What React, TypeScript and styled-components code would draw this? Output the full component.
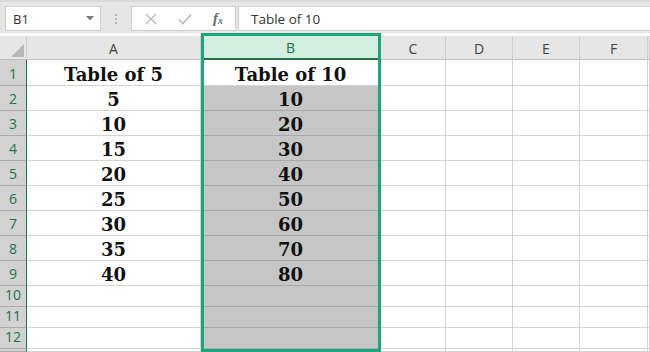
import styled, { createGlobalStyle } from 'styled-components';

const GlobalStyle = createGlobalStyle`
  html, body {
    margin: 0;
    padding: 0;
    background: #ffffff;
    overflow: hidden;
  }
  body {
    font-family: 'Open Sans', 'Noto Sans', sans-serif;
  }
`;

const ROWS: [string, string][] = [
  ['Table of 5', 'Table of 10'],
  ['5', '10'],
  ['10', '20'],
  ['15', '30'],
  ['20', '40'],
  ['25', '50'],
  ['30', '60'],
  ['35', '70'],
  ['40', '80'],
  ['', ''],
  ['', ''],
  ['', ''],
];

const COLUMNS = ['A', 'B', 'C', 'D', 'E', 'F'];
const SELECTED = 'B';

// row header + A..F widths, the last track takes what is left
const WIDTHS = [27, 174, 180, 65, 67, 67, 68];

const rowHeight = (index: number) => (index === 0 ? 26 : index < 9 ? 25 : 21);

const App = () => {
  const selIndex = COLUMNS.indexOf(SELECTED) + 1;
  const selLeft = WIDTHS.slice(0, selIndex).reduce((s, w) => s + w, 0);

  return (
    <>
      <GlobalStyle />
      <Window>
        <Toolbar>
          <NameBox>
            <span>B1</span>
            <svg width="8" height="5" viewBox="0 0 8 5">
              <path d="M0 0 H8 L4 4.5 Z" fill="#7a7a7a" />
            </svg>
          </NameBox>
          <Grip>
            <i />
            <i />
            <i />
          </Grip>
          <FxGroup>
            <svg width="12" height="12" viewBox="0 0 12 12">
              <path d="M1 1 L11 11 M11 1 L1 11" stroke="#b9b9b9" strokeWidth="1.4" />
            </svg>
            <svg width="14" height="12" viewBox="0 0 14 12">
              <path d="M1 6.5 L5 10.5 L13 1.5" stroke="#b9b9b9" strokeWidth="1.6" fill="none" />
            </svg>
            <Fx>
              f<sub>x</sub>
            </Fx>
          </FxGroup>
          <FormulaInput>Table of 10</FormulaInput>
        </Toolbar>

        <Sheet
          $cols={WIDTHS.map((w) => `${w}px`).join(' ')}
          $rows={ROWS.map((_, i) => `${rowHeight(i)}px`).join(' ')}
        >
          <Corner>
            <svg width="13" height="13" viewBox="0 0 13 13">
              <path d="M13 0 V13 H0 Z" fill="#b8b8b8" />
            </svg>
          </Corner>
          {COLUMNS.map((col) => (
            <ColHeader key={col} $selected={col === SELECTED}>
              {col}
            </ColHeader>
          ))}
          <ColHeader $selected={false} />

          {ROWS.map(([a, b], i) => (
            <Row key={i}>
              <RowHeader>{i + 1}</RowHeader>
              <Cell>{a}</Cell>
              <Cell $shaded={i > 0}>{b}</Cell>
              <Cell />
              <Cell />
              <Cell />
              <Cell />
              <Cell />
            </Row>
          ))}
          <Row>
            <RowHeader />
            <Cell />
            <Cell $shaded />
            <Cell />
            <Cell />
            <Cell />
            <Cell />
            <Cell />
          </Row>

          <SelectionFrame style={{ left: selLeft, width: WIDTHS[selIndex] }} />
        </Sheet>
      </Window>
    </>
  );
};

const Window = styled.div`
  width: 650px;
  height: 352px;
  display: flex;
  flex-direction: column;
  background: #ffffff;
  overflow: hidden;
`;

const Toolbar = styled.div`
  height: 33px;
  flex: 0 0 33px;
  box-sizing: border-box;
  display: flex;
  align-items: flex-start;
  padding: 4px 0 0 5px;
  background: #e6e6e6;
  border-top: 2px solid #d9d9d9;
`;

const Box = styled.div`
  height: 25px;
  box-sizing: border-box;
  background: #ffffff;
  border: 1px solid #cfcfcf;
  display: flex;
  align-items: center;
`;

const NameBox = styled(Box)`
  width: 96px;
  padding: 0 6px 0 7px;
  justify-content: space-between;
  font-size: 13px;
  color: #333333;
`;

const Grip = styled.div`
  width: 30px;
  height: 25px;
  display: flex;
  flex-direction: column;
  align-items: center;
  justify-content: center;
  gap: 2px;

  i {
    width: 2px;
    height: 2px;
    background: #b3b3b3;
  }
`;

const FxGroup = styled(Box)`
  width: 105px;
  padding: 0 12px 0 13px;
  justify-content: space-between;
`;

const Fx = styled.span`
  font-family: 'Liberation Serif', 'DejaVu Serif', serif;
  font-style: italic;
  font-weight: bold;
  font-size: 15px;
  color: #6a6a6a;

  sub {
    font-size: 10px;
    vertical-align: -1px;
  }
`;

const FormulaInput = styled(Box)`
  flex: 1;
  margin-left: 2px;
  margin-right: -2px;
  padding-left: 12px;
  font-size: 13.5px;
  color: #333333;
`;

const Sheet = styled.div<{ $cols: string; $rows: string }>`
  flex: 1;
  display: grid;
  grid-template-columns: ${(p) => p.$cols} 1fr;
  grid-template-rows: 27px ${(p) => p.$rows} 3px;
  position: relative;
`;

const Row = styled.div`
  display: contents;
`;

const Corner = styled.div`
  margin-top: 3px;
  background: #e6e6e6;
  border-right: 1px solid #cdcdcd;
  border-bottom: 1px solid #bdbdbd;
  box-sizing: border-box;
  display: flex;
  align-items: flex-end;
  justify-content: flex-end;
  padding: 0 2px 2px 0;
`;

const ColHeader = styled.div<{ $selected: boolean }>`
  margin-top: 3px;
  box-sizing: border-box;
  display: flex;
  align-items: flex-end;
  justify-content: center;
  padding-bottom: 3px;
  font-size: 14px;
  line-height: 14px;
  color: ${(p) => (p.$selected ? '#217346' : '#444444')};
  background: ${(p) => (p.$selected ? '#d3efdf' : '#e6e6e6')};
  border-bottom: ${(p) => (p.$selected ? '2px solid #217346' : '1px solid #bdbdbd')};
  border-right: 1px solid #cdcdcd;
`;

const RowHeader = styled.div`
  box-sizing: border-box;
  display: flex;
  align-items: flex-end;
  justify-content: center;
  padding-bottom: 2px;
  font-size: 14px;
  color: #217346;
  background: #d2d2d2;
  border-bottom: 1px solid #ababab;
  border-right: 1px solid #217346;
`;

const Cell = styled.div<{ $shaded?: boolean }>`
  box-sizing: border-box;
  display: flex;
  align-items: flex-end;
  justify-content: center;
  padding-bottom: 0;
  font-family: 'DejaVu Serif', 'Liberation Serif', serif;
  font-weight: bold;
  font-size: 18px;
  line-height: 20px;
  color: #111111;
  font-variant-numeric: oldstyle-nums;
  background: ${(p) => (p.$shaded ? '#c6c6c6' : '#ffffff')};
  border-right: 1px solid #d4d4d4;
  border-bottom: 1px solid ${(p) => (p.$shaded ? '#a9a9a9' : '#d4d4d4')};
`;

// heavy frame drawn over the selected column
const SelectionFrame = styled.div`
  position: absolute;
  top: 0;
  bottom: 0;
  box-sizing: border-box;
  border: 3px solid #1ca67f;
  pointer-events: none;
  z-index: 2;
`;

export default App;
